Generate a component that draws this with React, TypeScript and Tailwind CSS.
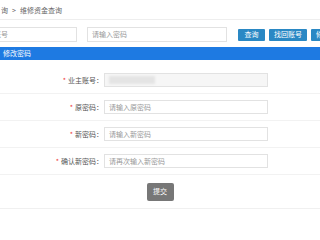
import React from "react";

const font = { fontFamily: '"Noto Sans CJK SC", "Noto Sans", sans-serif' };

function Field({ label, placeholder, disabled }: { label: string; placeholder?: string; disabled?: boolean }) {
  return (
    <div className="flex items-center h-[27px] border-b border-[#f2f2f2]">
      <div className="w-[104px] shrink-0 text-right text-[7px] text-[#555] pr-[1px]">
        <span className="text-[#e33] mr-[2px]">*</span>
        {label}：
      </div>
      <div
        className={
          "w-[164px] h-[14px] border border-[#e2e2e2] flex items-center px-[4px] text-[7px] " +
          (disabled ? "bg-[#f6f6f6]" : "bg-white text-[#999]")
        }
      >
        {disabled ? <div className="w-[46px] h-[8px] bg-[#e4e4e4] blur-[1px]" /> : placeholder}
      </div>
    </div>
  );
}

export default function App() {
  return (
    <div className="w-[320px] h-[240px] bg-white overflow-hidden" style={font}>
      {/* breadcrumb */}
      <div className="h-[20px] flex items-center border-b border-[#eee] text-[7px] text-[#666] pl-[1px] pt-[1px]">
        询 <span className="mx-[4px]">&gt;</span> 维修资金查询
      </div>

      {/* search row */}
      <div className="flex items-center h-[27px] pt-[2px]">
        <div className="shrink-0 ml-[-32px] w-[109px] h-[15px] border border-[#e2e2e2] flex items-center pl-[4px] text-[7px] text-[#999]">
          请输入账号
        </div>
        <div className="shrink-0 ml-[10px] w-[140px] h-[15px] border border-[#e2e2e2] flex items-center px-[4px] text-[7px] text-[#999]">
          请输入密码
        </div>
        <div className="shrink-0 ml-[11px] flex gap-[4px]">
          <div className="shrink-0 w-[27px] h-[12px] bg-[#2a88c4] rounded-[1px] text-white text-[7px] flex items-center justify-center">查询</div>
          <div className="shrink-0 w-[38px] h-[12px] bg-[#2a88c4] rounded-[1px] text-white text-[7px] flex items-center justify-center">找回账号</div>
          <div className="shrink-0 w-[38px] h-[12px] bg-[#2a88c4] rounded-[1px] text-white text-[7px] flex items-center justify-center">修改密码</div>
        </div>
      </div>

      {/* panel header */}
      <div className="h-[13px] bg-[#1e7ae2] flex items-center text-white text-[7px] pl-[3px]">
        修改密码
      </div>

      {/* form */}
      <div className="pt-[7px]">
        <Field label="业主账号" disabled />
        <Field label="原密码" placeholder="请输入原密码" />
        <Field label="新密码" placeholder="请输入新密码" />
        <Field label="确认新密码" placeholder="请再次输入新密码" />
      </div>

      <div className="h-[34px] flex items-center justify-center border-b border-[#f0f0f0]">
        <div className="w-[27px] h-[18px] bg-[#777] rounded-[2px] text-white text-[7px] flex items-center justify-center">提交</div>
      </div>
    </div>
  );
}
